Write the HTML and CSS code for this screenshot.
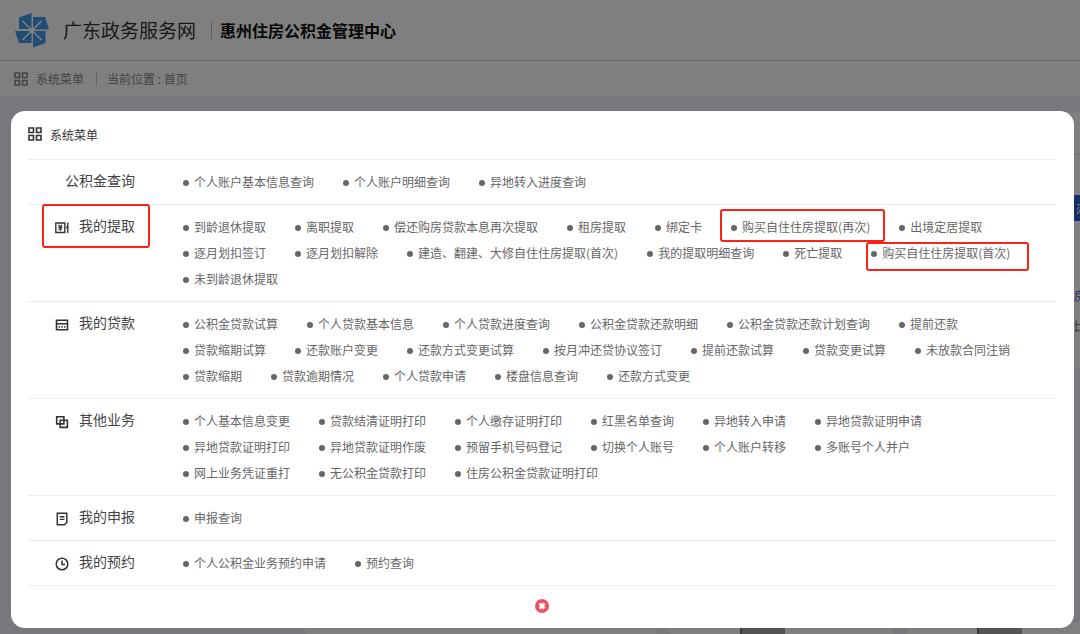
FILE: index.html
```
<!DOCTYPE html>
<html lang="zh-CN">
<head>
<meta charset="utf-8">
<meta name="viewport" content="width=device-width, initial-scale=1">
<title>惠州住房公积金管理中心</title>
<link rel="stylesheet" href="styles.css">
</head>
<body>
<svg class="defs" aria-hidden="true">
  <symbol id="grid" viewBox="0 0 14 14"><path d="M1 1h4.500v4.500H1zM8.500 1H13v4.500H8.500zM1 8.500h4.500V13H1zM8.500 8.500H13V13H8.500z" fill="none" stroke="currentColor" stroke-width="1.600"/></symbol>
</svg>

<div class="page">
  <header class="site-header">
    <svg class="logo" viewBox="0 0 36 36" aria-hidden="true">
      <path d="M5 5.500 17.500 1V17H5zM19 5h12l4 12.500H19zM1 19h16.500v12H5zM19 19h12.500v12L19 35.500z" fill="#3f9be8"/>
      <path d="M8.500 9 27.500 28M27.500 9 8.500 28" stroke="#fff" stroke-width="1.500"/>
      <circle cx="18" cy="18.500" r="2.600" fill="#fff"/>
    </svg>
    <span class="site-name">广东政务服务网</span>
    <span class="org-name">惠州住房公积金管理中心</span>
  </header>
  <nav class="crumbs">
    <svg class="icon-grid"><use href="#grid"/></svg>
    <span class="menu-label">系统菜单</span>
    <span class="location">当前位置 : 首页</span>
  </nav>
  <main class="backdrop">
    <aside class="side">
      <div class="side-line"></div>
      <div class="side-button">办</div>
      <div class="side-link">房</div>
      <div class="side-note">比</div>
    </aside>
    <div class="cards">
      <div class="card wide"></div>
      <div class="card"><span class="photo"></span></div>
      <div class="card last"><span class="photo"></span></div>
    </div>
  </main>
</div>

<div class="overlay">
  <section class="modal" role="dialog" aria-label="系统菜单">
    <h2 class="modal-title"><svg class="icon-grid"><use href="#grid"/></svg>系统菜单</h2>

    <div class="group">
      <h3 class="group-name">公积金查询</h3>
      <ul class="links">
        <li><a href="#">个人账户基本信息查询</a></li>
        <li><a href="#">个人账户明细查询</a></li>
        <li><a href="#">异地转入进度查询</a></li>
      </ul>
    </div>

    <div class="group">
      <h3 class="group-name marked"><svg class="icon" viewBox="0 0 14 14"><path d="M.8 2h9v9.500h-9zM12.800 1.500V12M11 6.500h1.800" fill="none" stroke="currentColor" stroke-width="1.400"/><path d="m3.500 3.800 1.800 2.200 1.800-2.200M3.300 6.300h4M3.300 8h4M5.300 6v4" fill="none" stroke="currentColor" stroke-width="1.200"/></svg>我的提取</h3>
      <ul class="links">
        <li><a href="#">到龄退休提取</a></li>
        <li><a href="#">离职提取</a></li>
        <li><a href="#">偿还购房贷款本息再次提取</a></li>
        <li><a href="#">租房提取</a></li>
        <li><a href="#">绑定卡</a></li>
        <li class="marked again"><a href="#">购买自住住房提取(再次)</a></li>
        <li><a href="#">出境定居提取</a></li>
        <li><a href="#">逐月划扣签订</a></li>
        <li><a href="#">逐月划扣解除</a></li>
        <li><a href="#">建造、翻建、大修自住住房提取(首次)</a></li>
        <li><a href="#">我的提取明细查询</a></li>
        <li><a href="#">死亡提取</a></li>
        <li class="marked first"><a href="#">购买自住住房提取(首次)</a></li>
        <li><a href="#">未到龄退休提取</a></li>
      </ul>
    </div>

    <div class="group">
      <h3 class="group-name"><svg class="icon" viewBox="0 0 14 14"><path d="M1.500 2.200h11v9.600h-11zM1.500 5.800h11" fill="none" stroke="currentColor" stroke-width="1.600"/><path d="M3.500 9h1.500M6.200 9h1.500M9 9h1.500" stroke="currentColor" stroke-width="1.400"/></svg>我的贷款</h3>
      <ul class="links">
        <li><a href="#">公积金贷款试算</a></li>
        <li><a href="#">个人贷款基本信息</a></li>
        <li><a href="#">个人贷款进度查询</a></li>
        <li><a href="#">公积金贷款还款明细</a></li>
        <li><a href="#">公积金贷款还款计划查询</a></li>
        <li><a href="#">提前还款</a></li>
        <li><a href="#">贷款缩期试算</a></li>
        <li><a href="#">还款账户变更</a></li>
        <li><a href="#">还款方式变更试算</a></li>
        <li><a href="#">按月冲还贷协议签订</a></li>
        <li><a href="#">提前还款试算</a></li>
        <li><a href="#">贷款变更试算</a></li>
        <li><a href="#">未放款合同注销</a></li>
        <li><a href="#">贷款缩期</a></li>
        <li><a href="#">贷款逾期情况</a></li>
        <li><a href="#">个人贷款申请</a></li>
        <li><a href="#">楼盘信息查询</a></li>
        <li><a href="#">还款方式变更</a></li>
      </ul>
    </div>

    <div class="group">
      <h3 class="group-name"><svg class="icon" viewBox="0 0 14 14"><path d="M1.700 1.700h7.200v7.200H1.700zM5.200 5.200h7.200v7.200H5.200z" fill="none" stroke="currentColor" stroke-width="1.600"/></svg>其他业务</h3>
      <ul class="links">
        <li><a href="#">个人基本信息变更</a></li>
        <li><a href="#">贷款结清证明打印</a></li>
        <li><a href="#">个人缴存证明打印</a></li>
        <li><a href="#">红黑名单查询</a></li>
        <li><a href="#">异地转入申请</a></li>
        <li><a href="#">异地贷款证明申请</a></li>
        <li><a href="#">异地贷款证明打印</a></li>
        <li><a href="#">异地贷款证明作废</a></li>
        <li><a href="#">预留手机号码登记</a></li>
        <li><a href="#">切换个人账号</a></li>
        <li><a href="#">个人账户转移</a></li>
        <li><a href="#">多账号个人并户</a></li>
        <li><a href="#">网上业务凭证重打</a></li>
        <li><a href="#">无公积金贷款打印</a></li>
        <li><a href="#">住房公积金贷款证明打印</a></li>
      </ul>
    </div>

    <div class="group">
      <h3 class="group-name"><svg class="icon" viewBox="0 0 14 14"><path d="M2.300 1.200h9.500v9.300l-2.300 2.300H2.300z" fill="none" stroke="currentColor" stroke-width="1.500"/><path d="M4.800 4.700h4.600M4.800 7.400h4.600" stroke="currentColor" stroke-width="1.400"/></svg>我的申报</h3>
      <ul class="links">
        <li><a href="#">申报查询</a></li>
      </ul>
    </div>

    <div class="group">
      <h3 class="group-name"><svg class="icon" viewBox="0 0 14 14"><circle cx="7" cy="7" r="5.800" fill="none" stroke="currentColor" stroke-width="1.500"/><path d="M7 3.500v4h3" fill="none" stroke="currentColor" stroke-width="1.500"/></svg>我的预约</h3>
      <ul class="links">
        <li><a href="#">个人公积金业务预约申请</a></li>
        <li><a href="#">预约查询</a></li>
      </ul>
    </div>

    <footer class="modal-footer">
      <button class="close" type="button" aria-label="关闭">
        <svg viewBox="0 0 14 14"><circle cx="7" cy="7" r="7" fill="#ee5165"/><path d="m4.500 4.500 5 5m0-5-5 5" stroke="#fff" stroke-width="2.800"/></svg>
      </button>
    </footer>
  </section>
</div>
</body>
</html>
```
FILE: styles.css
```
* { box-sizing: border-box; }

body {
  margin: 0;
  font-family: "Noto Sans CJK SC", sans-serif;
  font-size: 12px;
  color: #666;
  overflow: hidden;
}

.defs { position: absolute; width: 0; height: 0; }

/* Page behind the menu */
.page {
  display: flex;
  flex-direction: column;
  height: 100vh;
  background: #f2f3fa;
}

.site-header {
  display: flex;
  align-items: center;
  height: 61px;
  padding-left: 14px;
  background: #fff;
  border-bottom: 1px solid #d8d8d8;
}

.logo { width: 36px; height: 36px; }

.site-name {
  margin-left: 13px;
  font-size: 19px;
  line-height: 24px;
  color: #333;
}

.org-name {
  margin-left: 15px;
  padding-left: 8px;
  border-left: 1px solid #bbb;
  font-size: 16px;
  line-height: 18px;
  font-weight: 700;
  color: #111;
}

.crumbs {
  display: flex;
  align-items: center;
  height: 36px;
  padding-left: 14px;
  background: #fff;
  color: #888;
}

.icon-grid {
  width: 14px;
  height: 14px;
  margin-right: 8px;
}

.menu-label { line-height: 14px; }

.location {
  margin-left: 12px;
  padding-left: 10px;
  border-left: 1px solid #ccc;
  line-height: 14px;
}

.backdrop {
  flex: 1;
  display: flex;
  flex-direction: column;
  justify-content: space-between;
}

.side {
  align-self: flex-end;
  width: 8px;
  height: 256px;
  margin-top: 15px;
  overflow: hidden;
  background: #fff;
}

.side-line {
  height: 43px;
  border-bottom: 1px solid #ddd;
}

.side-button {
  height: 26px;
  margin-top: 40px;
  padding-left: 4px;
  background: #2a5cd0;
  color: #fff;
  line-height: 26px;
}

.side-link {
  margin-top: 66px;
  padding-left: 2px;
  color: #3a5fd8;
  line-height: 18px;
}

.side-note {
  margin-top: 12px;
  padding-left: 2px;
  line-height: 18px;
}

.cards {
  display: flex;
  gap: 14px;
  height: 12px;
  padding-left: 305px;
}

.card {
  width: 223px;
  background: #fff;
}

.card.wide { width: 351px; }

.card.last { flex: 1; }

.photo {
  display: block;
  width: 45px;
  height: 12px;
  margin-left: 70px;
  background: #a8a8a8;
  border: solid #777;
  border-width: 0 0 0 2px;
}

/* Menu window */
.overlay {
  position: fixed;
  inset: 0;
  padding: 111px 6px 0 11px;
  background: rgba(0, 0, 0, 0.5);
}

.modal {
  padding: 0 18px 0 17px;
  border-radius: 14px;
  background: #fff;
}

.modal-title {
  display: flex;
  align-items: center;
  height: 48px;
  margin: 0;
  padding-bottom: 2px;
  font-size: 12px;
  font-weight: 400;
  color: #333;
}

.group {
  display: flex;
  padding: 8px 0 10px;
  border-top: 1px solid #ececec;
}

.group-name {
  position: relative;
  display: flex;
  justify-content: flex-end;
  align-items: center;
  gap: 10px;
  width: 107px;
  height: 24px;
  margin: 0 48px 0 0;
  font-size: 14px;
  font-weight: 400;
  color: #444;
}

.icon {
  width: 14px;
  height: 14px;
  margin-top: 6px;
  color: #333;
}

.links {
  flex: 1;
  display: flex;
  flex-wrap: wrap;
  margin: 0;
  padding: 0;
  list-style: none;
}

.links li {
  position: relative;
  display: flex;
  align-items: center;
  gap: 5px;
  height: 26px;
  margin-right: 29px;
}

.links li::before {
  content: "";
  width: 6px;
  height: 6px;
  margin-top: 3px;
  border-radius: 50%;
  background: #666;
}

.links a {
  color: inherit;
  text-decoration: none;
}

/* Red frames around the entries to pick */
.marked::after {
  content: "";
  position: absolute;
  border: 2px solid #fb2216;
  border-radius: 3px;
}

.group-name.marked::after { inset: -9px -15px -11px 14px; }

.again.marked::after { inset: -4px -15px -3px -11px; }

.first.marked::after { inset: 3px -19px -6px -5px; }

.modal-footer {
  display: flex;
  justify-content: center;
  align-items: center;
  height: 43px;
  padding-bottom: 2px;
  border-top: 1px solid #ececec;
}

.close {
  width: 14px;
  height: 14px;
  padding: 0;
  border: 0;
  background: none;
}

.close svg { display: block; }
```
